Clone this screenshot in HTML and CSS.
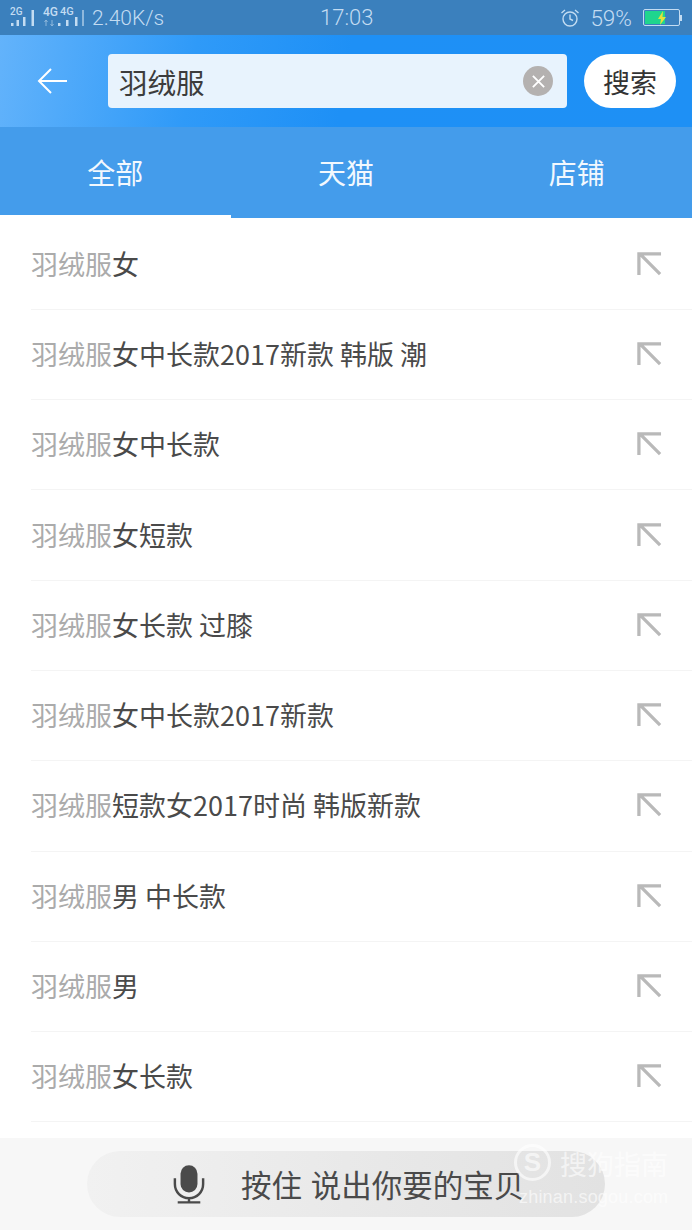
FILE: index.html
```html
<!DOCTYPE html>
<html lang="zh-CN">
<head>
    <meta charset="UTF-8">
    <meta name="viewport" content="width=device-width, initial-scale=1.0">
    <title>搜索</title>
    <link rel="stylesheet" href="styles.css">
</head>
<body>

    <div class="status-bar">
        <div class="status-left">
            <span class="signal">
                <span class="net-label">2G</span>
                <svg width="25" height="20" viewBox="0 0 25 20"><path d="M1 15h2.500v3H1zM6.500 12h2.500v6H6.500zM13 9h2.500v9H13zM21.500 2H24v16h-2.500z" fill="#c3dcf2"/></svg>
            </span>
            <span class="signal signal-4g">
                <span class="net-label">4G</span>
                <span class="net-label net-label-second">4G</span>
                <svg width="42" height="20" viewBox="0 0 42 20"><path d="M4 12v6M2.500 14L4 12l1.500 2M10 12v6M8.500 16l1.500 2 1.500-2" stroke="#8fb8dc" fill="none"/><path d="M16 15h2.500v3H16zM24 12h2.500v6H24zM33 9h2.500v9H33z" fill="#c3dcf2"/><path d="M40 2h2v16h-2z" fill="#8fb8dc"/></svg>
            </span>
            <span class="speed">2.40K/s</span>
        </div>
        <div class="status-time">17:03</div>
        <div class="status-right">
            <svg width="20" height="20" viewBox="0 0 20 20" fill="none" stroke="#c3dcf2" stroke-width="1.400"><circle cx="10" cy="11" r="7"/><path d="M10 6.500V11l3 1.500M1.500 5L5 2M18.500 5L15 2"/></svg>
            <span class="battery-text">59%</span>
            <span class="battery">
                <span class="battery-fill"></span>
                <svg class="battery-bolt" width="10" height="14" viewBox="0 0 10 14"><path d="M6 0L1 8h3l-1 6 6-8H5.500z" fill="#e3e23a"/></svg>
            </span>
            <span class="battery-tip"></span>
        </div>
    </div>

    <div class="search-header">
        <svg class="back-icon" width="32" height="28" viewBox="0 0 32 28" fill="none" stroke="#fff" stroke-width="2"><path d="M31 14H3M15 2L3 14l12 12"/></svg>
        <div class="search-box">
            <span class="search-text">羽绒服</span>
            <span class="clear-button">
                <svg width="15" height="15" viewBox="0 0 16 16" stroke="#fff" stroke-width="2"><path d="M2 2l12 12M14 2L2 14"/></svg>
            </span>
        </div>
        <button class="search-button">搜索</button>
    </div>

    <div class="tabs">
        <div class="tab tab-active">全部</div>
        <div class="tab">天猫</div>
        <div class="tab">店铺</div>
    </div>

    <ul class="suggest-list" id="suggest-list"></ul>

    <div class="voice-bar">
        <div class="voice-button">
            <svg width="32" height="42" viewBox="0 0 34 42" fill="none"><rect x="8" y="1" width="18" height="29" rx="9" fill="#4a4a4a"/><path d="M2 15v6c0 8.500 6.500 15 15 15s15-6.500 15-15v-6M17 36v4M5 40.500h24" stroke="#4a4a4a" stroke-width="2.600"/></svg>
            <span class="voice-text">按住 说出你要的宝贝</span>
        </div>
    </div>

    <div class="watermark">
        <div class="watermark-top">
            <span class="watermark-logo">S</span>
            <span class="watermark-name">搜狗指南</span>
        </div>
        <div class="watermark-url">zhinan.sogou.com</div>
    </div>

    <script src="app.js"></script>
</body>
</html>
```

FILE: app.js
```js
const suggestions = [
    ['女'],
    ['女中长款2017新款 韩版 潮'],
    ['女中长款'],
    ['女短款'],
    ['女长款 过膝'],
    ['女中长款2017新款'],
    ['短款女2017时尚 韩版新款'],
    ['男 中长款'],
    ['男'],
    ['女长款']
];

const list = document.getElementById('suggest-list');

suggestions.forEach(item => {
    const row = document.createElement('li');
    row.className = 'suggest-row';
    row.innerHTML = `
        <span class="suggest-text"><span class="keyword">羽绒服</span>${item[0]}</span>
        <svg class="fill-icon" width="25" height="25" viewBox="0 0 26 26" fill="none" stroke="#b9b9b9" stroke-width="3.400"><path d="M2 25V3h23M3 3l21 21"/></svg>
    `;
    list.appendChild(row);
});
```

FILE: styles.css
```css
* {
    box-sizing: border-box;
}

body {
    font-family: "Noto Sans CJK SC", "Noto Sans", sans-serif;
    background-color: #fff;
    color: #4a4a4a;
    margin: 0;
    width: 692px;
    height: 1230px;
    display: flex;
    flex-direction: column;
    overflow: hidden;
    position: relative;
}

.status-bar {
    height: 35px;
    background-color: #3b80bd;
    color: #c3dcf2;
    font-family: Roboto, sans-serif;
    font-size: 21px;
    font-weight: 300;
    display: flex;
    align-items: center;
    justify-content: space-between;
    padding: 0 10px 0 10px;
    position: relative;
}

.status-left,
.status-right {
    display: flex;
    align-items: center;
}

.signal {
    position: relative;
    display: block;
    height: 20px;
    margin-right: 7px;
}

.signal svg {
    display: block;
}

.net-label {
    position: absolute;
    top: -2px;
    left: 0;
    font-size: 10px;
    font-weight: 500;
    line-height: 12px;
}

.signal-4g .net-label {
    left: 1px;
    font-size: 12px;
}

.signal-4g .net-label-second {
    left: 18px;
    font-size: 11px;
}

.signal-4g {
    margin-right: 8px;
}

.status-time {
    position: absolute;
    left: 320px;
    top: 6px;
    font-size: 22px;
    line-height: 24px;
}

.battery-text {
    font-size: 22.500px;
    margin: 0 11px 0 10px;
}

.battery {
    position: relative;
    display: block;
    width: 37px;
    height: 17px;
    border: 1px solid #c3dcf2;
    border-radius: 2px;
    padding: 1px;
}

.battery-fill {
    display: block;
    width: 60%;
    height: 100%;
    background-color: #1fd58e;
}

.battery-bolt {
    position: absolute;
    left: 13px;
    top: 1px;
}

.battery-tip {
    width: 2px;
    height: 6px;
    background-color: #c3dcf2;
}

.search-header {
    height: 92px;
    background: linear-gradient(100deg, #63b3fb 0%, #2f9af8 28%, #1e90f6 50%, #1e90f5 100%);
    display: flex;
    align-items: center;
    padding: 0 16px 0 36px;
}

.back-icon {
    flex: none;
    margin-right: 40px;
}

.search-box {
    flex: none;
    width: 459px;
    height: 54px;
    background-color: #e8f3fd;
    border-radius: 4px;
    display: flex;
    align-items: center;
    justify-content: space-between;
    padding: 0 14px 0 11px;
}

.search-text {
    font-size: 28.500px;
    color: #3c3c3c;
}

.clear-button {
    width: 30px;
    height: 30px;
    border-radius: 50%;
    background-color: #b4b1b0;
    display: flex;
    align-items: center;
    justify-content: center;
}

.search-button {
    flex: none;
    width: 92px;
    height: 54px;
    margin-left: 17px;
    background-color: #fff;
    border: none;
    border-radius: 27px;
    font-family: inherit;
    font-size: 27px;
    color: #333;
    padding: 0;
}

.tabs {
    height: 92px;
    background-color: #449ceb;
    display: flex;
}

.tab {
    flex: 1;
    text-align: center;
    color: #f2f8fe;
    font-size: 28px;
    line-height: 90px;
    height: 92px;
    border-bottom: 1px solid #fff;
}

.tab-active {
    border-bottom: 4px solid #fff;
}

.suggest-list {
    list-style: none;
    margin: 0;
    padding: 0.500px 0 0;
    flex: 1;
}

.suggest-row {
    height: 90.300px;
    margin-left: 31px;
    padding: 0 30px 2px 0;
    border-bottom: 1px solid #f4f4f4;
    display: flex;
    align-items: center;
    justify-content: space-between;
    font-size: 27px;
}

.keyword {
    color: #ababab;
}

.voice-bar {
    height: 92px;
    background-color: #f7f7f7;
    display: flex;
    align-items: center;
    padding-left: 87px;
}

.voice-button {
    width: 518px;
    height: 66px;
    border-radius: 33px;
    background: linear-gradient(90deg, #f1f1f1 0%, #e9e9e9 50%, #e2e2e2 100%);
    display: flex;
    align-items: center;
    padding-left: 86px;
}

.voice-text {
    font-size: 30.500px;
    word-spacing: 2px;
    margin-left: 36px;
    white-space: nowrap;
}

.watermark {
    position: absolute;
    left: 514px;
    top: 1142px;
    color: rgba(255, 255, 255, 0.62);
}

.watermark-top {
    display: flex;
    align-items: center;
}

.watermark-logo {
    width: 37px;
    height: 37px;
    border: 3px solid rgba(255, 255, 255, 0.62);
    border-radius: 50%;
    font-family: "Liberation Sans", sans-serif;
    font-size: 26px;
    font-weight: bold;
    line-height: 31px;
    text-align: center;
}

.watermark-name {
    font-size: 27px;
    line-height: 38px;
    margin: 3px 0 0 9px;
}

.watermark-url {
    font-family: "Liberation Sans", sans-serif;
    font-size: 18px;
    line-height: 24px;
    margin: 2px 0 0 5px;
    letter-spacing: 0.2px;
}
```
